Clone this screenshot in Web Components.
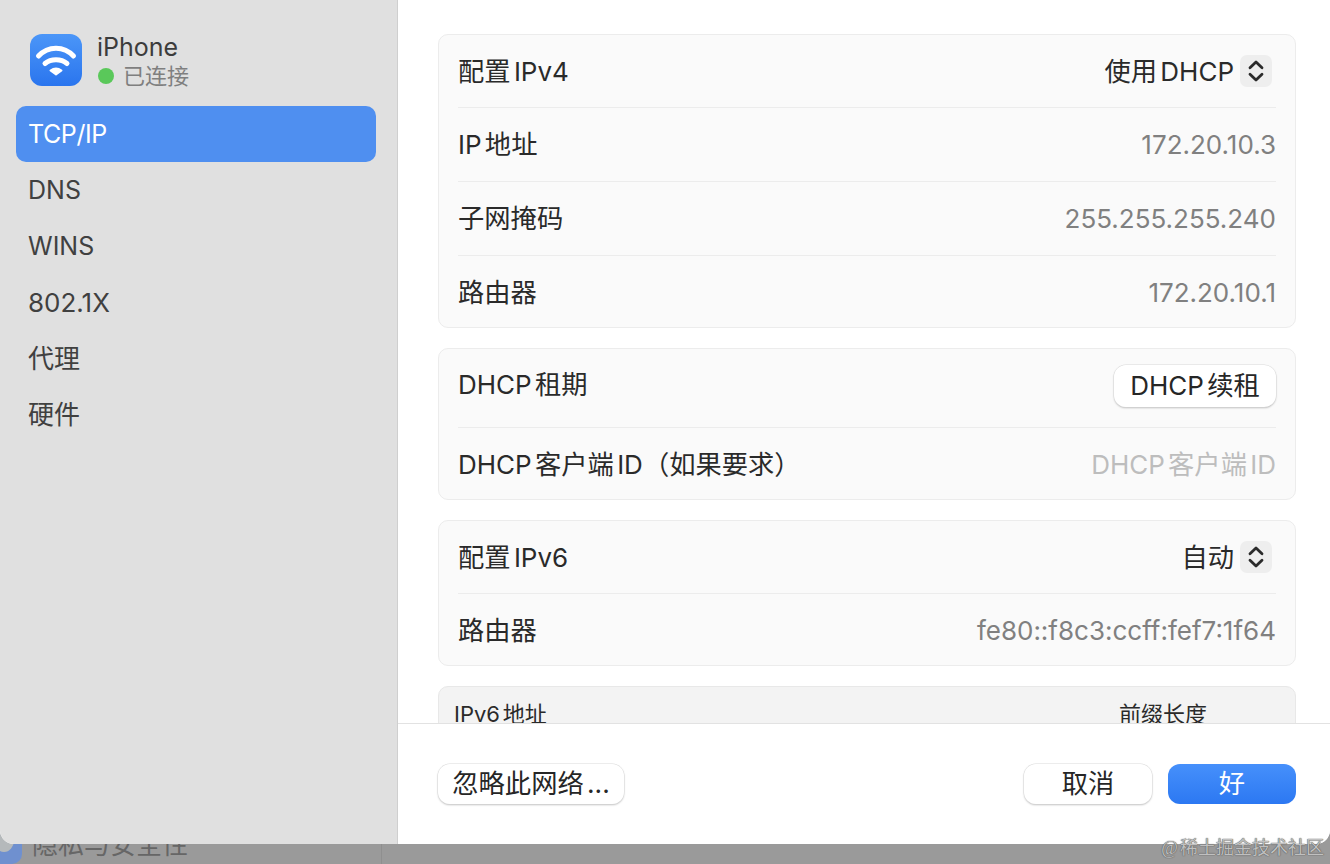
<!DOCTYPE html>
<html lang="zh"><head><meta charset="utf-8"><title>TCP/IP</title>
<style>
html,body{margin:0;height:100%;overflow:hidden;background:#9a9a9a}
body{font-family:Inter,"Noto Sans CJK SC",sans-serif;text-autospace:normal}
</style></head><body>
<net-app>
  <net-side slot="side">
    <nav-item selected style="letter-spacing:-.4px">TCP/IP</nav-item>
    <nav-item>DNS</nav-item>
    <nav-item>WINS</nav-item>
    <nav-item style="font-size:26px">802.1X</nav-item>
    <nav-item cjk>代理</nav-item>
    <nav-item cjk>硬件</nav-item>
  </net-side>
  <form-card>
    <form-row h="73"><span slot="label">配置<en-t>IPv4</en-t></span><pop-up slot="value">使用<en-t>DHCP</en-t></pop-up></form-row>
    <form-row h="74" kind="value"><span slot="label"><en-t>IP</en-t>地址</span><span slot="value">172.20.10.3</span></form-row>
    <form-row h="74" kind="value"><span slot="label">子网掩码</span><span slot="value">255.255.255.240</span></form-row>
    <form-row h="71" kind="value" last><span slot="label">路由器</span><span slot="value">172.20.10.1</span></form-row>
  </form-card>
  <form-card>
    <form-row h="79" lift><span slot="label"><en-t>DHCP</en-t>租期</span><mac-button slot="value" w="162" h="42"><en-t>DHCP</en-t>续租</mac-button></form-row>
    <form-row h="71" kind="hint" last><span slot="label"><en-t>DHCP</en-t>客户端<en-t>ID</en-t>（如果要求）</span><span slot="value"><en-t>DHCP</en-t>客户端<en-t>ID</en-t></span></form-row>
  </form-card>
  <form-card>
    <form-row h="73"><span slot="label">配置<en-t>IPv6</en-t></span><pop-up slot="value">自动</pop-up></form-row>
    <form-row h="71" kind="value" last><span slot="label">路由器</span><span slot="value">fe80::f8c3:ccff:fef7:1f64</span></form-row>
  </form-card>
  <table-head></table-head>
  <mac-button slot="foot-left" w="186" h="40">忽略此网络...</mac-button>
  <mac-button slot="foot-right" w="128" h="40">取消</mac-button>
  <mac-button slot="foot-right" w="128" h="40" primary>好</mac-button>
</net-app>
<script>
function def(name,html,setup){
  customElements.define(name,class extends HTMLElement{
    constructor(){super();this.attachShadow({mode:'open'}).innerHTML=html;}
    connectedCallback(){setup&&setup(this)}
  });
}
def('en-t',`<style>:host{display:inline;font-size:26px}</style><slot></slot>`);
def('net-app',`<style>
:host{display:block;width:1330px;height:864px;position:relative;overflow:hidden;background:#9a9a9a;color:#262626}
.sheet{position:relative;z-index:1;height:844px;display:flex;background:#fff;border-radius:0 0 14px 14px;overflow:hidden}
.main{flex:1;min-width:0;display:flex;flex-direction:column}
.scroll{height:723px;overflow:hidden;box-sizing:border-box;padding:34px 34px 0 40px;display:flex;flex-direction:column;gap:20px;flex:none}
.foot{flex:1;border-top:1px solid #e2e2e2;padding:40px 34px 0 40px;display:flex;justify-content:space-between;align-items:flex-start;background:#fff}
.right{display:flex;gap:16px}
.behind{display:flex;align-items:flex-start;height:34px;margin-top:-14px;padding-left:32px;font-size:26px;line-height:30px;color:#666;background:#9a9a9a;position:relative}
.behind i{position:absolute;left:-16px;top:0;width:38px;height:34px;border-radius:10px;background:#6f90cf}
.behind i::after{content:"";position:absolute;left:10px;top:-2px;width:20px;height:24px;border-radius:50%;background:#b5b9bb}
.mark{position:absolute;z-index:2;right:6px;bottom:4px;font:18px/24px "Liberation Serif","Noto Sans CJK SC",serif;color:#c0c0c0;text-shadow:0 0 1px #555,0 0 1px #555}
.edge{position:absolute;z-index:0;left:381px;bottom:0;width:1px;height:20px;background:#8f8f8f}
</style>
<div class="sheet"><slot name="side"></slot>
 <div class="main"><div class="scroll"><slot></slot></div>
 <div class="foot"><slot name="foot-left"></slot><div class="right"><slot name="foot-right"></slot></div></div></div></div>
<div class="behind"><i></i><span>隐私与安全性</span></div><div class="edge"></div>
<div class="mark">@稀土掘金技术社区</div>`);
def('net-side',`<style>
:host{display:block;flex:none;width:397px;background:#e0e0e0;border-right:1px solid #cfcfcf}
.head{display:flex;gap:15px;padding:34px 0 0 30px;height:72px}
svg{display:block;width:52px;height:52px;flex:none}
.t{margin-top:-2px}
.n{font-size:25px;line-height:30px;color:#3c3c3c}
.s{display:flex;align-items:center;gap:9px;font-size:22px;line-height:28px;color:#7f7f7f}
.s b{width:16px;height:16px;border-radius:50%;background:#5ac85a;margin-left:1px}
nav{margin:0 21px 0 16px;display:flex;flex-direction:column}
</style>
<div class="head"><svg viewBox="0 0 52 52"><defs><linearGradient id="g" x1="0" y1="0" x2="0" y2="1"><stop offset="0" stop-color="#4b96f8"/><stop offset="1" stop-color="#2a75ee"/></linearGradient></defs>
<rect width="52" height="52" rx="12" fill="url(#g)"/>
<g fill="none" stroke="#fff" stroke-width="5" stroke-linecap="round"><path d="M8.500 22C18 11.500 34 11.500 43.500 22"/><path d="M15 29.500C21 24.500 31 24.500 37 29.500"/></g>
<path d="M26 40.500L20.500 36.500Q26 32.500 31.500 36.500Z" fill="#fff" stroke="#fff" stroke-width="2" stroke-linejoin="round"/></svg>
<div class="t"><div class="n">iPhone</div><div class="s"><b></b><span>已连接</span></div></div></div>
<nav><slot></slot></nav>`);
def('nav-item',`<style>
:host{display:flex;align-items:center;height:56px;box-sizing:border-box;padding-left:12px;border-radius:10px;font-size:25px;color:#404040}
:host([selected]){background:#4f8ff0;color:#fff}
:host([cjk]){font-size:26px;padding-bottom:4px}
</style><slot></slot>`);
def('form-card',`<style>
:host{display:block;flex:none;background:#fafafa;border:1px solid #ececec;border-radius:10px;padding:0 19px}
</style><slot></slot>`);
def('form-row',`<style>
:host{display:flex;align-items:center;justify-content:space-between;font-size:26px;color:#2a2a2a;box-sizing:border-box;border-bottom:1px solid #ececec}
:host([last]){border-bottom:0;padding-top:2px}
:host([lift]){padding-bottom:4px}
.lab{display:block;padding-bottom:4px;font-size:26.300px}
:host([lift]) .lab{padding-bottom:7px}
.val{display:flex;align-items:center}
:host([kind=value]) .val{color:#808080}
:host([kind=hint]) .val{color:#bdbdbd;padding-bottom:4px;font-size:26.300px}
</style><span class="lab"><slot name="label"></slot></span><span class="val"><slot name="value"></slot></span>`,el=>{el.style.height=el.getAttribute('h')+'px'});
def('pop-up',`<style>
:host{display:inline-flex;align-items:center;gap:6px;margin-right:4px;font-size:26.300px}
.t{padding-bottom:4px}
.b{width:32px;height:32px;border-radius:7px;background:#eeeeee;display:block}
svg{display:block;width:32px;height:32px}
</style><span class="t"><slot></slot></span><span class="b"><svg viewBox="0 0 32 32" fill="none" stroke="#2b2b2b" stroke-width="2.800" stroke-linecap="round" stroke-linejoin="round"><path d="M10 12.700L16 7L22 12.700"/><path d="M10 19.300L16 25L22 19.300"/></svg></span>`);
def('mac-button',`<style>
:host{display:inline-flex;align-items:center;justify-content:center;box-sizing:border-box;padding-bottom:6px;border-radius:12px;background:#fff;font-size:26.300px;color:#262626;box-shadow:0 0 0 .5px #dcdcdc,0 1px 2px rgba(0,0,0,.28)}
:host([primary]){background:linear-gradient(#4690fb,#2c78f2);color:#fff;box-shadow:none}
</style><span><slot></slot></span>`,el=>{el.style.width=el.getAttribute('w')+'px';el.style.height=el.getAttribute('h')+'px'});
def('table-head',`<style>
:host{display:flex;flex:none;height:60px;box-sizing:border-box;background:#f3f3f3;border:1px solid #e8e8e8;border-radius:10px 10px 0 0;padding:13px 0 0 15px;font-size:22px;line-height:28px;color:#2a2a2a}
.a{width:665px;flex:none}
</style><span class="a">IPv6地址</span><span>前缀长度</span>`);
</script>
</body></html>
